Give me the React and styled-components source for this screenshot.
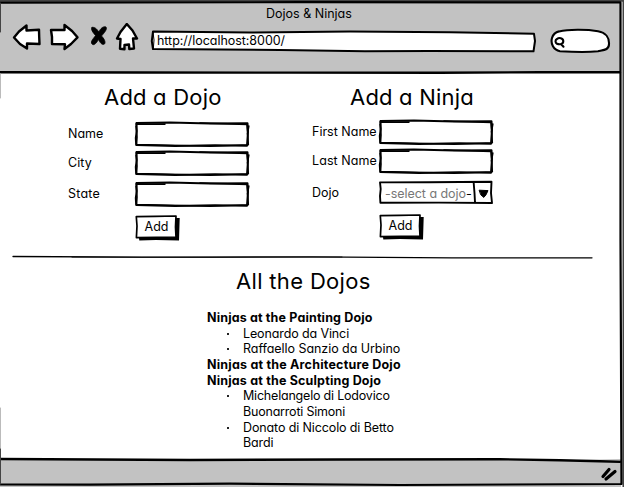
import React from "react";
import styled, { createGlobalStyle } from "styled-components";

const GlobalStyle = createGlobalStyle`
  * { box-sizing: border-box; }
  body { margin: 0; background: #fff; overflow: hidden; }
`;

const Window = styled.div`
  position: relative;
  width: 624px;
  height: 487px;
  display: flex;
  flex-direction: column;
  background: #fff;
  color: #000;
  font: 12.5px/16px Inter, "Liberation Sans", sans-serif;
  font-feature-settings: "cv11", "calt" 0;
`;

const Sketch = styled.svg`
  position: absolute;
  inset: 0;
  width: 100%;
  height: 100%;
  overflow: visible;
  pointer-events: none;
  fill: none;
  stroke: #000;
  stroke-linejoin: round;
  stroke-linecap: round;
`;

const Chrome = styled.header`
  height: 73px;
  flex: none;
  background: #c2c2c2;
  margin-right: 3px;
`;

const Title = styled.div`
  height: 23px;
  padding: 6px 0 0 266px;
  line-height: 16px;
  white-space: nowrap;
`;

const Toolbar = styled.div`
  display: flex;
  height: 34px;
  padding-left: 12px;
`;

const NavIcons = styled.svg`
  width: 128px;
  height: 34px;
  flex: none;
`;

const AddressBar = styled.div`
  position: relative;
  width: 386px;
  height: 22px;
  margin: 7px 0 0 11px;
  padding: 3px 0 0 6px;
  line-height: 16px;
  letter-spacing: -0.04px;
`;

const SearchBox = styled.svg`
  width: 62px;
  height: 26px;
  margin: 5px 0 0 13px;
`;

const Layer = styled.span`
  position: relative;
`;

const Content = styled.main`
  height: 386px;
  flex: none;
`;

const Forms = styled.div`
  display: flex;
  height: 182px;
`;

const Form = styled.section`
  width: ${(p) => p.$width}px;
  padding: 8px 0 0 ${(p) => p.$left}px;
`;

const Heading = styled.h2`
  margin: 0 0 0 ${(p) => p.$indent}px;
  font-size: 22px;
  line-height: 32px;
  font-weight: 400;
  white-space: nowrap;
  letter-spacing: ${(p) => p.$track}px;
`;

const Row = styled.div`
  display: flex;
  height: 25px;
  margin-top: ${(p) => p.$gap}px;
`;

const Label = styled.label`
  width: 67px;
  flex: none;
  padding-top: 4px;
  white-space: nowrap;
  letter-spacing: ${(p) => p.$track || 0}px;
`;

const Field = styled.div`
  position: relative;
  width: 114px;
  height: 25px;
`;

const Select = styled.div`
  position: relative;
  width: 114px;
  height: 23px;
  padding: 5px 0 0 6px;
  color: #777;
  white-space: nowrap;
  letter-spacing: -0.04px;
`;

const Dash = styled.span`
  color: #000;
`;

const Button = styled.button`
  position: relative;
  display: block;
  width: 45px;
  height: 27px;
  margin: 8px 0 0 67px;
  padding: 0 2px 3px 0;
  border: 0;
  background: none;
  color: #000;
  font: inherit;
  font-feature-settings: inherit;
`;

const Rule = styled.svg`
  display: block;
  width: 582px;
  height: 4px;
  margin-left: 12px;
`;

const Directory = styled.section`
  padding: 6px 0 0 207px;
`;

const List = styled.div`
  padding-top: 13px;
  line-height: 15.65px;
  white-space: nowrap;
`;

const Group = styled.div`
  font-weight: 700;
  letter-spacing: ${(p) => p.$track}px;
`;

const Ninja = styled.div`
  display: flex;
  padding-left: 20px;
  letter-spacing: ${(p) => p.$track}px;
  &::before {
    content: "";
    width: 2px;
    height: 2px;
    flex: none;
    margin: 7px 14px 0 0;
    background: #222;
  }
`;

const Status = styled.footer`
  height: 28px;
  flex: none;
  margin-right: 3px;
  background: #c2c2c2;
`;

function SketchField() {
  return (
    <Field>
      <Sketch viewBox="0 0 114 25">
        <path strokeWidth="2" d="M1.5 1 L35 .6 L75 1.6 L112.5 1.3 L113 10 L112 23.7 L80 23.3 L40 24.1 L1.2 23 L.8 16 L1.8 9Z" />
        <path strokeWidth="1.6" d="M1 2.1 L30 2.1 M65 1 L112 2.4 L112.8 14 L113.3 22.7 L75 24.3 L35 23.3 L1.5 22.5 L2 15 L1 4 M113.8 4 L112.4 12" />
      </Sketch>
    </Field>
  );
}

function AddButton() {
  return (
    <Button>
      <Sketch viewBox="0 0 45 27">
        <path fill="#000" stroke="none" d="M4 23 L40 22 L40.5 3 L44.7 3 L44 25.4 L21 24.9 L4.3 25.6Z" />
        <path fill="#fff" strokeWidth="1.7" d="M1.3 1.7 L20 1.3 L41 1 L40.5 12 L41 22 L22 22.4 L1.4 22.6 L2 11Z" />
      </Sketch>
      <Layer>Add</Layer>
    </Button>
  );
}

function Navigation() {
  return (
    <NavIcons viewBox="12 23 128 34" stroke="#000" strokeWidth="2.4" strokeLinejoin="round" strokeLinecap="round" fill="#fff">
      <path d="M14 37.5 L19 31.5 L26.5 25.5 L26.5 30.5 L39 29.7 L39.2 37 L39.5 44 L27 43.5 L27 48.5 L20 44Z" />
      <path d="M51 30 L64.5 30 L64.5 25 L72 31 L77.5 37.3 L71 44 L64.5 49 L65 44.3 L52 44 L52 37Z" />
      <path d="M126.8 24 L132.5 30.5 L137 38.5 L133 38.5 L134 48.5 L129.3 49 L129 44.5 L124.5 45 L124.5 49.3 L120 48.8 L120.5 39 L117 38.5 L120.5 32Z" />
      <path fill="#000" strokeWidth=".8" d="M92 27.5 C94.5 26.5 97 29 98.8 32 C100.5 28.5 103 26 106 27 C107.5 29.5 104 33 101.5 36 C104 38.5 106 42 104.5 44 C102 45.5 100 42.5 98.4 39.5 C96.5 43 94 46 92 44 C90 41.5 94 38 95.5 35.5 C93 32.5 90.5 29.5 92 27.5Z" />
    </NavIcons>
  );
}

export default function App() {
  return (
    <>
      <GlobalStyle />
      <Window>
        <Chrome>
          <Title>Dojos &amp; Ninjas</Title>
          <Toolbar>
            <Navigation />
            <AddressBar>
              <Sketch viewBox="151 30 386 22">
                <path fill="#fff" strokeWidth="2" d="M153 31.5 L250 32.6 L350 31.5 L450 32.3 L534 33.8 L535 41 L533.5 51.3 L430 51 L365 51.3 L280 50 L153 49 L151.8 41Z" />
                <path strokeWidth="1" d="M153 32 L154 40 L153.3 49" />
              </Sketch>
              <Layer>http://localhost:8000/</Layer>
            </AddressBar>
            <SearchBox viewBox="550 28 62 26" fill="none" stroke="#000" strokeWidth="2.1" strokeLinecap="round">
              <path fill="#fff" d="M559 31.4 C568 29.4 586 29.2 598 31.2 C606 32.5 609.3 38 609 44 C609 50 604 50 598 51.3 C587 52.5 572 52 560 51.2 C553 50 550.5 43 552 38 C553.2 34 556 32 559 31.4Z" />
              <path d="M557 39 C559 37.3 563 38 563.3 41 C563.4 44 560 45 557 43.8 C555 42.5 555 40 557 39Z M561 44 L563.5 46.7" />
            </SearchBox>
          </Toolbar>
        </Chrome>
        <Content>
          <Forms>
            <Form $left={68} $width={312}>
              <Heading $indent={36} $track={0.2}>Add a Dojo</Heading>
              <Row $gap={9}><Label>Name</Label><SketchField /></Row>
              <Row $gap={4}><Label $track={0.1}>City</Label><SketchField /></Row>
              <Row $gap={6}><Label $track={0.2}>State</Label><SketchField /></Row>
              <AddButton />
            </Form>
            <Form $left={0} $width={240}>
              <Heading $indent={38} $track={0.2}>Add a Ninja</Heading>
              <Row $gap={7}><Label>First Name</Label><SketchField /></Row>
              <Row $gap={4}><Label $track={0.08}>Last Name</Label><SketchField /></Row>
              <Row $gap={7}>
                <Label>Dojo</Label>
                <Select>
                  <Sketch viewBox="0 0 114 23">
                    <path strokeWidth="1.9" d="M1 1.4 L50 1.2 L112.5 .8 L112 12 L113 22 L60 21.6 L1.4 21.8 L1 15 L1.7 8Z M94.7 2 L95.5 12 L96 21.5" />
                    <path fill="#000" strokeWidth="1" d="M100.5 9.2 L109 9.6 L107 13.8 L104.8 16.4 L102 14Z" />
                  </Sketch>
                  -select a dojo<Dash>-</Dash>
                </Select>
              </Row>
              <AddButton />
            </Form>
          </Forms>
          <Rule viewBox="0 0 582 4" fill="none" stroke="#000" strokeLinecap="round">
            <path strokeWidth="1.3" d="M1 1.5 L130 2.2 L300 1.8 L440 2.8 L580 2.8" />
            <path strokeWidth=".8" d="M60 2.1 L200 2.5 L330 2" />
          </Rule>
          <Directory>
            <Heading $indent={29} $track={0.33}>All the Dojos</Heading>
            <List>
              <Group $track={0.15}>Ninjas at the Painting Dojo</Group>
              <Ninja $track={-0.12}>Leonardo da Vinci</Ninja>
              <Ninja $track={-0.05}>Raffaello Sanzio da Urbino</Ninja>
              <Group $track={0.21}>Ninjas at the Architecture Dojo</Group>
              <Group $track={0.18}>Ninjas at the Sculpting Dojo</Group>
              <Ninja $track={-0.2}>Michelangelo di Lodovico<br />Buonarroti Simoni</Ninja>
              <Ninja $track={-0.12}>Donato di Niccolo di Betto<br />Bardi</Ninja>
            </List>
          </Directory>
        </Content>
        <Status />
        <Sketch viewBox="0 0 624 487">
          <path stroke="#444" strokeWidth="2" d="M0 .8 H624 M623.5 0 V487" />
          <path strokeWidth="2.2" d="M0 2.6 L300 2.2 L620.5 2.4 L620.5 240 L621.5 484 L400 485 L230 483.7 L90 484.7 L0 484.5" />
          <path strokeWidth="2.4" d="M0 72.3 L140 72.5 L290 72.6 L440 72.8 L540 72.2 L620 72.3" />
          <path fill="#fff" stroke="none" d="M400 458 L530 458 L620 460 V461 L540 460Z" />
          <path strokeWidth="2.4" d="M0 459 L190 460 L340 459.5 L500 459.2 L560 460.2 L620 461.7" />
          <path stroke="#bbb" strokeWidth="1" d="M.5 74 V98 M.5 408 V457" />
          <path stroke="#444" strokeWidth="1" d="M.5 3 V32 M.5 449 V484" />
          <path strokeWidth="3.2" d="M603 476.5 L609 469.5 M606 479 L615 471.5" />
        </Sketch>
      </Window>
    </>
  );
}
